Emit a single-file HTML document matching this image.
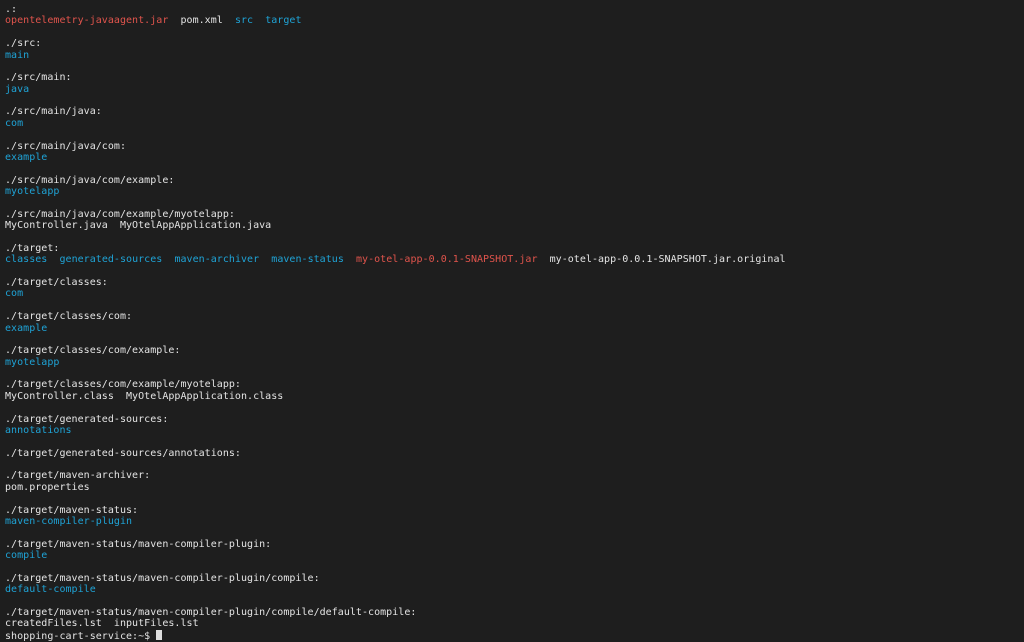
<!DOCTYPE html>
<html><head><meta charset="utf-8"><style>
html,body{margin:0;padding:0;background:#1e1e1e;width:1024px;height:630px;overflow:hidden}
pre{margin:0;position:absolute;left:5px;top:4px;font-family:"DejaVu Sans Mono","Liberation Mono",monospace;font-size:10px;line-height:11.37px;letter-spacing:0.03px;color:#e4e4e4}
.b{color:#1fa3d6}.r{color:#e0544c}
.cur{display:inline-block;width:6px;height:10px;background:#ddd;vertical-align:-1px}
</style></head><body><pre>.:
<span class="r">opentelemetry-javaagent.jar</span>  pom.xml  <span class="b">src</span>  <span class="b">target</span>

./src:
<span class="b">main</span>

./src/main:
<span class="b">java</span>

./src/main/java:
<span class="b">com</span>

./src/main/java/com:
<span class="b">example</span>

./src/main/java/com/example:
<span class="b">myotelapp</span>

./src/main/java/com/example/myotelapp:
MyController.java  MyOtelAppApplication.java

./target:
<span class="b">classes</span>  <span class="b">generated-sources</span>  <span class="b">maven-archiver</span>  <span class="b">maven-status</span>  <span class="r">my-otel-app-0.0.1-SNAPSHOT.jar</span>  my-otel-app-0.0.1-SNAPSHOT.jar.original

./target/classes:
<span class="b">com</span>

./target/classes/com:
<span class="b">example</span>

./target/classes/com/example:
<span class="b">myotelapp</span>

./target/classes/com/example/myotelapp:
MyController.class  MyOtelAppApplication.class

./target/generated-sources:
<span class="b">annotations</span>

./target/generated-sources/annotations:

./target/maven-archiver:
pom.properties

./target/maven-status:
<span class="b">maven-compiler-plugin</span>

./target/maven-status/maven-compiler-plugin:
<span class="b">compile</span>

./target/maven-status/maven-compiler-plugin/compile:
<span class="b">default-compile</span>

./target/maven-status/maven-compiler-plugin/compile/default-compile:
createdFiles.lst  inputFiles.lst
shopping-cart-service:~$ <span class="cur"></span>
</pre></body></html>
